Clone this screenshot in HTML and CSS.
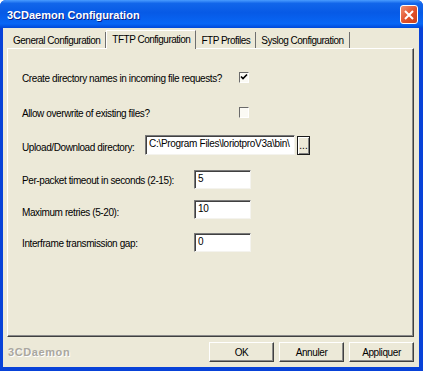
FILE: index.html
```html
<!DOCTYPE html>
<html lang="en">
  <head>
    <meta charset="UTF-8" />
    <title>3CDaemon Configuration</title>
    <link rel="stylesheet" href="styles.css">
  </head>

  <body>
    <div class="window">
      <div class="titlebar">
        <span class="title">3CDaemon Configuration</span>
        <div class="close">
          <svg width="10" height="10" viewBox="0 0 10 10">
            <path d="M1 1 L9 9 M9 1 L1 9" stroke="#fff" stroke-width="2" />
          </svg>
        </div>
      </div>

      <div class="client">
        <div class="tabs">
          <div class="tab">General Configuration</div>
          <div class="tab active">TFTP Configuration</div>
          <div class="tab">FTP Profiles</div>
          <div class="tab">Syslog Configuration</div>
        </div>

        <div class="panel">
          <div class="row">
            <span class="label label-wide">Create directory names in incoming file requests?</span>
            <span class="check">
              <svg width="8" height="8" viewBox="0 0 8 8">
                <path d="M1 3.5 L3 5.5 L7 1.5" fill="none" stroke="#000" stroke-width="1.6" />
              </svg>
            </span>
          </div>

          <div class="row gap-15">
            <span class="label label-wide">Allow overwrite of existing files?</span>
            <span class="check"></span>
          </div>

          <div class="row gap-13">
            <span class="label label-short">Upload/Download directory:</span>
            <div class="field field-dir">C:\Program Files\loriotproV3a\bin\</div>
            <div class="browse">...</div>
          </div>

          <div class="row gap-14">
            <span class="label label-mid">Per-packet timeout in seconds (2-15):</span>
            <div class="field field-num">5</div>
          </div>

          <div class="row gap-10">
            <span class="label label-mid nudge">Maximum retries (5-20):</span>
            <div class="field field-num">10</div>
          </div>

          <div class="row gap-13">
            <span class="label label-mid">Interframe transmission gap:</span>
            <div class="field field-num">0</div>
          </div>
        </div>

        <div class="footer">
          <span class="brand">3CDaemon</span>
          <div class="buttons">
            <div class="button">OK</div>
            <div class="button">Annuler</div>
            <div class="button">Appliquer</div>
          </div>
        </div>
      </div>
    </div>
  </body>
</html>
```

FILE: styles.css
```css
* {
  margin: 0;
  padding: 0;
  box-sizing: border-box;
}

body {
  width: 423px;
  height: 371px;
  overflow: hidden;
  background: #ffffff;
  font-family: "Liberation Sans", Arial, sans-serif;
  font-size: 10px;
  letter-spacing: -0.4px;
  color: #000;
}

.window {
  width: 423px;
  height: 371px;
  display: flex;
  flex-direction: column;
  background: #0842d8;
  border-radius: 6px 6px 0 0;
  overflow: hidden;
}

.titlebar {
  height: 28px;
  flex: none;
  display: flex;
  align-items: center;
  justify-content: space-between;
  padding: 0 5px 0 7px;
  background: linear-gradient(
    to bottom,
    #4a9cff 0%,
    #1266ea 12%,
    #075ae6 45%,
    #0866f5 85%,
    #0048d8 100%
  );
}

.title {
  color: #fff;
  font-weight: bold;
  font-size: 11px;
  letter-spacing: 0;
  text-shadow: 1px 1px #0a1f8a;
  margin-top: 2px;
}

.close {
  width: 18px;
  height: 19px;
  margin-top: 1px;
  display: flex;
  justify-content: center;
  align-items: center;
  background: linear-gradient(135deg, #f29070, #e0502a 55%, #c8401a);
  border: 1px solid #ffffff;
  border-radius: 3px;
}

.client {
  flex: 1;
  margin: 0 4px 4px 3px;
  background: #ece9d8;
  display: flex;
  flex-direction: column;
  padding-top: 2px;
}

/* tabs */

.tabs {
  height: 18px;
  display: flex;
  align-items: flex-end;
  padding-left: 5px;
  position: relative;
  z-index: 1;
}

.tab {
  height: 16px;
  padding: 0 5px;
  display: flex;
  align-items: center;
  border-right: 1px solid #6f6f6f;
  white-space: nowrap;
  letter-spacing: -0.5px;
}

.tab.active {
  height: 19px;
  margin-bottom: -1px;
  padding-bottom: 2px;
  background: #ece9d8;
  border-left: 1px solid #ffffff;
  border-top: 1px solid #ffffff;
}

/* tab panel */

.panel {
  height: 289px;
  margin: 0 5px 0 4px;
  border-top: 1px solid #ffffff;
  border-left: 1px solid #ffffff;
  border-right: 1px solid #404040;
  border-bottom: 1px solid #404040;
  box-shadow: inset -1px -1px #8a8a8a;
  padding: 18px 0 0 14px;
  display: flex;
  flex-direction: column;
}

.row {
  height: 20px;
  display: flex;
  align-items: center;
  flex: none;
}

.gap-10 {
  margin-top: 10px;
}

.gap-13 {
  margin-top: 13px;
}

.gap-14 {
  margin-top: 14px;
}

.gap-15 {
  margin-top: 15px;
}

.label {
  padding-top: 2px;
  white-space: nowrap;
}

.label-wide {
  width: 217px;
}

.label-mid {
  width: 172px;
}

.label-short {
  width: 123px;
  padding-top: 5px;
}

.nudge {
  padding-top: 6px;
}

.check {
  width: 10px;
  height: 11px;
  display: flex;
  justify-content: center;
  align-items: center;
  background: #fbfaf4;
  border-top: 1px solid #6a6a6a;
  border-left: 1px solid #6a6a6a;
  border-right: 1px solid #ffffff;
  border-bottom: 1px solid #ffffff;
}

.field {
  height: 20px;
  background: #ffffff;
  border-top: 1px solid #7a7a7a;
  border-left: 1px solid #7a7a7a;
  border-right: 1px solid #f4f3ee;
  border-bottom: 1px solid #f4f3ee;
  box-shadow: inset 1px 1px #404040;
  padding: 2px 0 0 3px;
  white-space: nowrap;
  overflow: hidden;
}

.field-dir {
  width: 150px;
  letter-spacing: -0.3px;
}

.field-num {
  width: 57px;
  height: 19px;
}

.browse {
  width: 13px;
  height: 19px;
  margin-left: 2px;
  display: flex;
  justify-content: center;
  align-items: flex-end;
  padding-bottom: 3px;
  border: 1px solid #1a1a1a;
  box-shadow: inset 1px 1px #ffffff, inset -1px -1px #808080;
  letter-spacing: 0;
}

/* footer */

.footer {
  flex: 1;
  display: flex;
  justify-content: space-between;
  align-items: flex-start;
  padding: 5px 5px 0 5px;
}

.brand {
  margin-top: 4px;
  font-weight: bold;
  font-size: 11px;
  letter-spacing: 0.6px;
  color: #a9a7a0;
  text-shadow: 1px 1px #ffffff;
}

.buttons {
  display: flex;
  gap: 5px;
}

.button {
  width: 65px;
  height: 20px;
  display: flex;
  justify-content: center;
  align-items: center;
  border-top: 1px solid #ffffff;
  border-left: 1px solid #ffffff;
  border-right: 1px solid #404040;
  border-bottom: 1px solid #404040;
  box-shadow: inset -1px -1px #8a8a8a;
}
```
